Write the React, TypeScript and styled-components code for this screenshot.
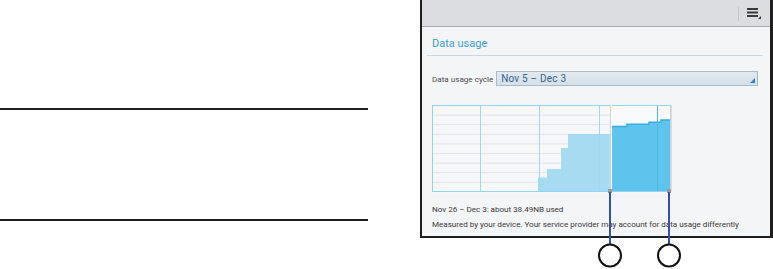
import React from "react";
import styled, { createGlobalStyle } from "styled-components";

const Global = createGlobalStyle`
  html, body { margin: 0; padding: 0; background: #ffffff; }
  body { font-family: Roboto, "Liberation Sans", sans-serif; }
`;

const Page = styled.div`
  display: flex;
  width: 773px;
  height: 269px;
  background: #ffffff;
`;

const LeftColumn = styled.div`
  width: 368px;
  display: flex;
  flex-direction: column;
  padding-top: 108px;
  gap: 109px;
`;

const Rule = styled.div`
  height: 2px;
  background: #231f20;
`;

const RightColumn = styled.div`
  position: relative;
  margin-left: 52px;
  width: 353px;
  height: 269px;
`;

const Screen = styled.div`
  box-sizing: border-box;
  width: 353px;
  height: 238px;
  border: 2px solid #1f1f1f;
  border-top: none;
  border-right-width: 3px;
  background: #f4f5f7;
  display: flex;
  flex-direction: column;
`;

const TopBar = styled.div`
  height: 27px;
  flex: none;
  box-sizing: border-box;
  background: #dcdde0;
  border-bottom: 1px solid #a7a8ab;
  display: flex;
  justify-content: flex-end;
  align-items: center;
  padding-right: 8px;
`;

const BarDivider = styled.div`
  width: 1px;
  height: 14px;
  background: #c4c5c8;
  margin-right: 7px;
  margin-top: 1px;
`;

const Body = styled.div`
  padding: 0 8px 0 10px;
  display: flex;
  flex-direction: column;
`;

const Title = styled.div`
  margin-top: 10px;
  font-size: 11px;
  line-height: 14px;
  color: #3a9fd6;
  padding-bottom: 4px;
`;

const TitleLine = styled.div`
  height: 1px;
  background: #c9d9e3;
  margin-left: -5px;
  margin-right: -1px;
`;

const CycleRow = styled.div`
  display: flex;
  align-items: center;
  margin-top: 15px;
  gap: 3px;
`;

const Label = styled.span`
  font-size: 8.1px;
  color: #4a4a4a;
  white-space: nowrap;
`;

const Select = styled.div`
  position: relative;
  box-sizing: border-box;
  width: 262px;
  height: 15px;
  background: linear-gradient(#e2e9ef, #d6e0e8);
  border: 1px solid #a5bccc;
  font-size: 10px;
  line-height: 13px;
  color: #38648a;
  padding-left: 4px;
  letter-spacing: 0.2px;
`;

const Corner = styled.div`
  position: absolute;
  right: 2px;
  bottom: 2px;
  width: 0;
  height: 0;
  border-left: 5px solid transparent;
  border-bottom: 5px solid #3a80b8;
`;

const Chart = styled.svg`
  display: block;
  margin-top: 19px;
  width: 240px;
  height: 88px;
`;

const Note = styled.div<{ $top: number }>`
  font-size: 8.1px;
  letter-spacing: -0.03px;
  line-height: 15px;
  color: #3a3a3a;
  white-space: nowrap;
  margin-top: ${(p) => p.$top}px;
`;

const Callouts = styled.svg`
  position: absolute;
  left: 0;
  top: 0;
  width: 353px;
  height: 269px;
  pointer-events: none;
`;

function MenuIcon() {
  return (
    <svg width="16" height="14" viewBox="0 0 16 14">
      <rect x="1" y="2" width="11" height="2" fill="#3b3b3b" />
      <rect x="1" y="5.5" width="11" height="2" fill="#3b3b3b" />
      <rect x="1" y="9" width="11" height="2" fill="#3b3b3b" />
      <path d="M15 10 L15 13 L12 13 Z" fill="#3b3b3b" />
    </svg>
  );
}

const gridYs = [9.6, 19.2, 28.8, 38.4, 48, 57.6, 67.2, 76.8];
const vLines = [48.5, 107.5, 167.5, 225.5];

function UsageChart() {
  return (
    <Chart viewBox="0 0 240 88">
      <rect x="0" y="0" width="240" height="88" fill="#f6f7f9" />
      <rect x="178" y="0" width="61" height="87" fill="#f9fafb" />
      {gridYs.map((y) => (
        <line key={y} x1="1" x2="178" y1={y + 0.5} y2={y + 0.5} stroke="#e2e5e9" strokeWidth="1" />
      ))}
      <path d="M106,87 V72.5 H115 V64 H129 V43 H136 V29 H178 V87 Z" fill="#a7dbf1" />
      <path d="M179,87 V21.5 H195 V19.3 H217 V17.3 H229 V15 H239 V87 Z" fill="#5ec4ed" />
      <path d="M179,21.5 H195 V19.3 H217 V17.3 H229 V15 H239" fill="none" stroke="#36ace4" strokeWidth="1.5" />
      {vLines.map((x) => (
        <line key={x} x1={x} x2={x} y1="1" y2="87" stroke={x > 200 ? "#4db8e6" : "#9fd8f2"} strokeWidth="1" />
      ))}
      <rect x="0.5" y="0.5" width="238" height="86" fill="none" stroke="#94d4f1" strokeWidth="1" />
      <line x1="178.5" x2="178.5" y1="0" y2="87" stroke="#d0d2d5" strokeWidth="1" />
      <line x1="179.5" x2="179.5" y1="0" y2="87" stroke="#ffffff" strokeWidth="1" />
      <line x1="239" x2="239" y1="0" y2="87" stroke="#d3d5d8" strokeWidth="1.5" />
    </Chart>
  );
}

export default function App() {
  return (
    <>
      <Global />
      <Page>
        <LeftColumn>
          <Rule />
          <Rule />
        </LeftColumn>
        <RightColumn>
          <Screen>
            <TopBar>
              <BarDivider />
              <MenuIcon />
            </TopBar>
            <Body>
              <Title>Data usage</Title>
              <TitleLine />
              <CycleRow>
                <Label>Data usage cycle</Label>
                <Select>
                  Nov 5 – Dec 3
                  <Corner />
                </Select>
              </CycleRow>
              <UsageChart />
              <Note $top={9}>Nov 26 – Dec 3: about 38.49NB used</Note>
              <Note $top={0}>Measured by your device. Your service provider may account for data usage differently</Note>
            </Body>
          </Screen>
          <Callouts viewBox="0 0 353 269">
            <rect x="188" y="189" width="4" height="4" fill="#9a9a9a" />
            <rect x="247" y="189" width="4" height="4" fill="#9a9a9a" />
            <line x1="190" x2="190" y1="192" y2="244" stroke="#3a4db3" strokeWidth="2" />
            <line x1="249" x2="249" y1="192" y2="244" stroke="#3a4db3" strokeWidth="2" />
            <circle cx="190" cy="255.5" r="11" fill="#ffffff" stroke="#111111" strokeWidth="2" />
            <circle cx="249" cy="255.5" r="11" fill="#ffffff" stroke="#111111" strokeWidth="2" />
          </Callouts>
        </RightColumn>
      </Page>
    </>
  );
}
